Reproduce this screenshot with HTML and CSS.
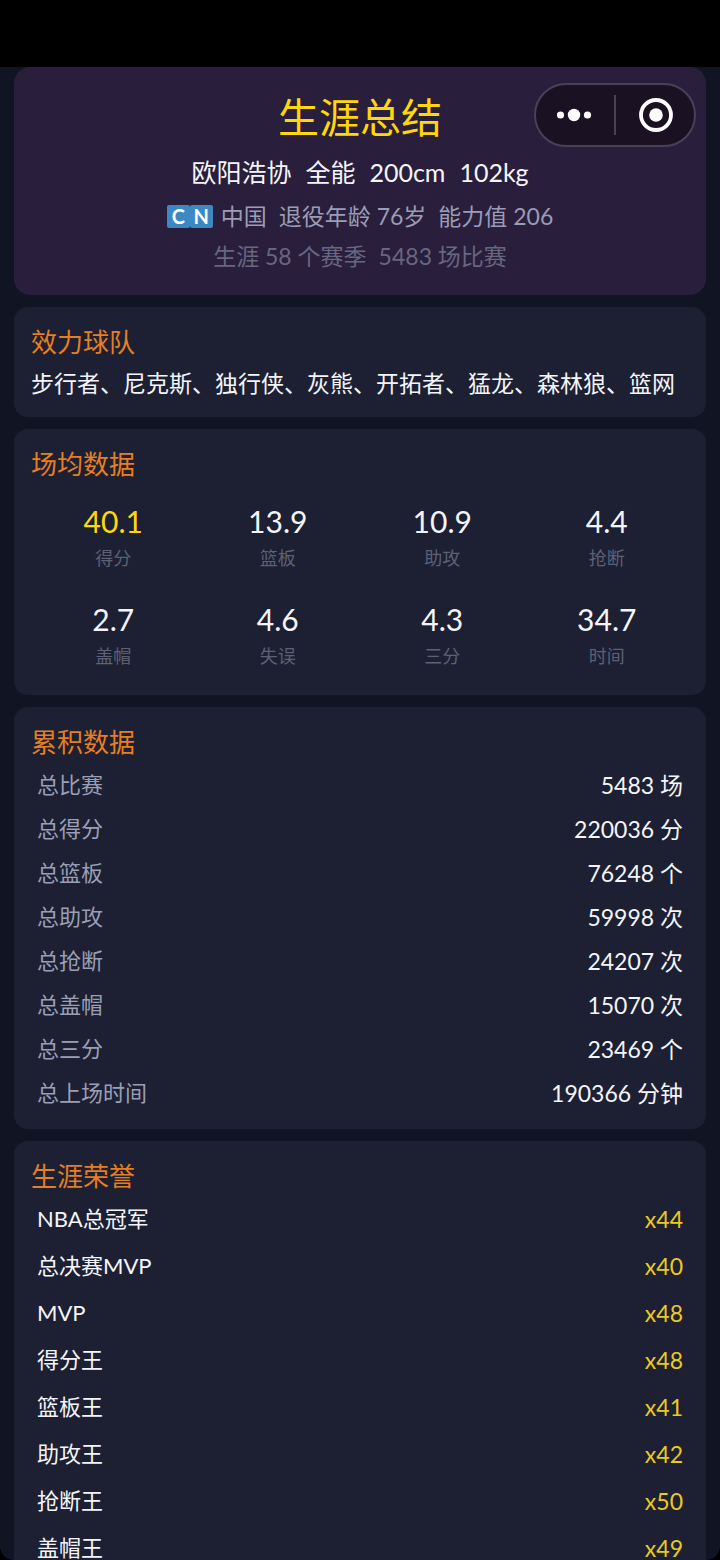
FILE: index.html
```html
<!DOCTYPE html>
<html lang="zh-CN">
<head>
  <meta charset="UTF-8">
  <meta name="viewport" content="width=device-width, initial-scale=1.0">
  <title>生涯总结</title>
  <link rel="stylesheet" href="styles.css">
</head>
<body>
  <div class="app">
    <div class="status-bar"></div>

    <!-- Mini program menu -->
    <div class="capsule">
      <button type="button" class="capsule-btn" aria-label="更多">
        <svg width="36" height="36" viewBox="0 0 36 36" fill="#fff">
          <circle cx="3.5" cy="18" r="3.6"/>
          <circle cx="17" cy="18" r="6.2"/>
          <circle cx="30.5" cy="18" r="3.6"/>
        </svg>
      </button>
      <span class="capsule-line"></span>
      <button type="button" class="capsule-btn" aria-label="关闭">
        <svg width="36" height="36" viewBox="0 0 36 36">
          <circle cx="19" cy="18" r="15" fill="none" stroke="#fff" stroke-width="3.8"/>
          <circle cx="19" cy="18" r="6.8" fill="#fff"/>
        </svg>
      </button>
    </div>

    <main class="content">
      <header class="summary">
        <h1>生涯总结</h1>
        <p class="player"><span>欧阳浩协</span><span>全能</span><span>200cm</span><span>102kg</span></p>
        <p class="meta">
          <span class="country"><span class="flag"><b>C</b><b>N</b></span>中国</span>
          <span>退役年龄 76岁</span>
          <span>能力值 206</span>
        </p>
        <p class="meta seasons"><span>生涯 58 个赛季</span><span>5483 场比赛</span></p>
      </header>

      <section class="card">
        <h2>效力球队</h2>
        <p class="teams">步行者、尼克斯、独行侠、灰熊、开拓者、猛龙、森林狼、篮网</p>
      </section>

      <section class="card">
        <h2>场均数据</h2>
        <div class="stats">
          <div class="stat top"><strong>40.1</strong><span>得分</span></div>
          <div class="stat"><strong>13.9</strong><span>篮板</span></div>
          <div class="stat"><strong>10.9</strong><span>助攻</span></div>
          <div class="stat"><strong>4.4</strong><span>抢断</span></div>
          <div class="stat"><strong>2.7</strong><span>盖帽</span></div>
          <div class="stat"><strong>4.6</strong><span>失误</span></div>
          <div class="stat"><strong>4.3</strong><span>三分</span></div>
          <div class="stat"><strong>34.7</strong><span>时间</span></div>
        </div>
      </section>

      <section class="card">
        <h2>累积数据</h2>
        <table class="list totals">
          <tr><th scope="row">总比赛</th><td>5483 场</td></tr>
          <tr><th scope="row">总得分</th><td>220036 分</td></tr>
          <tr><th scope="row">总篮板</th><td>76248 个</td></tr>
          <tr><th scope="row">总助攻</th><td>59998 次</td></tr>
          <tr><th scope="row">总抢断</th><td>24207 次</td></tr>
          <tr><th scope="row">总盖帽</th><td>15070 次</td></tr>
          <tr><th scope="row">总三分</th><td>23469 个</td></tr>
          <tr><th scope="row">总上场时间</th><td>190366 分钟</td></tr>
        </table>
      </section>

      <section class="card">
        <h2>生涯荣誉</h2>
        <table class="list honors">
          <tr><th scope="row">NBA总冠军</th><td>x44</td></tr>
          <tr><th scope="row">总决赛MVP</th><td>x40</td></tr>
          <tr><th scope="row">MVP</th><td>x48</td></tr>
          <tr><th scope="row">得分王</th><td>x48</td></tr>
          <tr><th scope="row">篮板王</th><td>x41</td></tr>
          <tr><th scope="row">助攻王</th><td>x42</td></tr>
          <tr><th scope="row">抢断王</th><td>x50</td></tr>
          <tr><th scope="row">盖帽王</th><td>x49</td></tr>
        </table>
      </section>
    </main>
  </div>
</body>
</html>
```
FILE: styles.css
```css
* {
  box-sizing: border-box;
}

body {
  margin: 0;
  background-color: #000;
  color: #f4f5fa;
  font-family: Lato, "Noto Sans CJK SC", sans-serif;
  font-size: 23px;
}

h1, h2, p {
  margin: 0;
  font-weight: 400;
}

.app {
  position: relative;
  display: flex;
  flex-direction: column;
  height: 100vh;
  overflow: hidden;
  background-color: #111423;
  border-radius: 0 0 14px 14px;
}

.status-bar {
  flex: none;
  height: 67px;
  background-color: #000;
}

.content {
  flex: 1;
  min-height: 0;
  display: flex;
  flex-direction: column;
  gap: 12px;
  padding: 0 14px;
  overflow: hidden;
}

/* Floating menu */
.capsule {
  position: absolute;
  top: 83px;
  right: 24px;
  display: flex;
  align-items: center;
  width: 162px;
  height: 64px;
  background-color: #1a1222;
  border: 2px solid #4b4157;
  border-radius: 32px;
}

.capsule-btn {
  flex: 1;
  display: flex;
  justify-content: center;
  padding: 0;
  border: none;
  background: none;
  cursor: pointer;
}

.capsule-line {
  width: 2px;
  height: 40px;
  background-color: #4b4157;
}

/* Header card */
.summary {
  flex: none;
  padding: 21px 17px 19px;
  text-align: center;
  background-color: #291e3c;
  border-radius: 16px;
}

.summary h1 {
  font-size: 41px;
  line-height: 60px;
  color: #ffd70a;
}

.player {
  display: flex;
  justify-content: center;
  gap: 14px;
  font-size: 25px;
  line-height: 48px;
}

.meta {
  display: flex;
  justify-content: center;
  gap: 12px;
  line-height: 40px;
  color: #9a9db5;
}

.seasons {
  color: #686780;
}

.country {
  display: flex;
  align-items: center;
  gap: 8px;
}

.flag {
  display: flex;
}

.flag b {
  width: 23px;
  height: 23px;
  border-radius: 2px;
  background-color: #3b88c3;
  color: #fff;
  font-size: 20px;
  line-height: 23px;
}

/* Cards */
.card {
  flex: none;
  padding: 17px 17px 14px;
  background-color: #1c2032;
  border-radius: 14px;
}

.card h2 {
  margin-bottom: 3px;
  font-size: 26px;
  line-height: 36px;
  color: #e67e22;
}

.teams {
  line-height: 40px;
}

.stats {
  display: grid;
  grid-template-columns: repeat(4, 1fr);
}

.stat {
  display: flex;
  flex-direction: column;
  gap: 4px;
  padding: 16px 0 12px;
  text-align: center;
}

.stat strong {
  font-size: 30px;
  font-weight: 400;
  line-height: 40px;
}

.stat span {
  font-size: 18px;
  line-height: 26px;
  color: #5d6175;
}

.stat.top strong {
  color: #ffd70a;
}

/* Label / value lists */
.list {
  width: 100%;
  border-collapse: collapse;
}

.list th,
.list td {
  height: 44px;
  padding: 0 6px;
  font-weight: 400;
  line-height: 36px;
}

.list th {
  font-size: 22px;
  text-align: left;
}

.list td {
  text-align: right;
}

.totals th {
  color: #9a9fb5;
}

.honors th,
.honors td {
  height: 47px;
  padding-bottom: 4px;
}

.honors td {
  color: #ecc91e;
}
```
